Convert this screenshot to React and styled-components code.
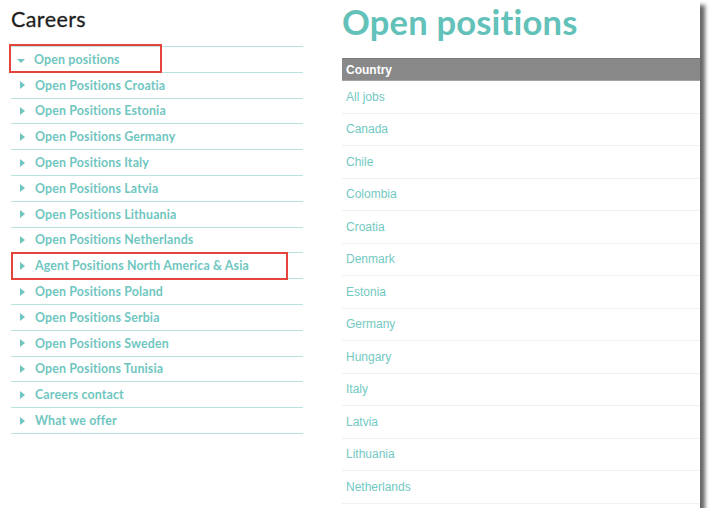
import React from 'react'
import styled, { createGlobalStyle } from 'styled-components'

const GlobalStyle = createGlobalStyle`
  html, body {
    margin: 0;
    padding: 0;
    background: #fff;
  }
  body {
    font-family: Lato, "Open Sans", Arial, sans-serif;
  }
`

const Frame = styled.div`
  width: 700px;
  height: 508px;
  background: #fff;
  box-shadow: 5px 5px 4px rgba(0, 0, 0, 0.6);
  overflow: hidden;
  display: grid;
  grid-template-columns: 292px 1fr;
  column-gap: 39px;
  padding-left: 11px;
  box-sizing: border-box;
`

const Sidebar = styled.aside`
  display: flex;
  flex-direction: column;
`

const Title = styled.h2`
  margin: 6px 0 0;
  height: 40px;
  font-size: 21.5px;
  font-weight: 400;
  color: #1e1e1e;
  letter-spacing: 0.4px;
  -webkit-text-stroke: 0.3px #1e1e1e;
`

const Menu = styled.ul`
  list-style: none;
  margin: 0;
  padding: 0;
  border-top: 1px solid #b9e2de;
`

const MenuItem = styled.li`
  position: relative;
  height: 25.8px;
  box-sizing: border-box;
  border-bottom: 1px solid #b9e2de;
  display: flex;
  align-items: center;
  gap: 9px;
  padding-left: ${p => (p.open ? '6px' : '9px')};
  font-size: 12.4px;
  font-weight: 700;
  letter-spacing: 0.15px;
  color: #6fc6bf;
`

const Arrow = styled.span`
  width: 0;
  height: 0;
  border-style: solid;
  ${p =>
    p.open
      ? `border-width: 4px 4px 0 4px;
         border-color: #6fc6bf transparent transparent transparent;
         margin-top: 3px;`
      : `border-width: 4px 0 4px 5px;
         border-color: transparent transparent transparent #6fc6bf;
         margin-right: 1px;`}
`

// red annotation boxes drawn over the menu
const Highlight = styled.span`
  position: absolute;
  left: ${p => p.left}px;
  top: ${p => p.top}px;
  width: ${p => p.width}px;
  height: ${p => p.height}px;
  border: 2px solid #e5443b;
  box-sizing: border-box;
  pointer-events: none;
`

const Main = styled.main`
  display: flex;
  flex-direction: column;
`

const Heading = styled.h1`
  margin: 0;
  height: 58px;
  font-size: 34.5px;
  line-height: 44px;
  font-weight: 700;
  color: #62c1b9;
  letter-spacing: 0.2px;
`

const Table = styled.table`
  width: 380px;
  border-collapse: collapse;
  font-family: Arial, "Liberation Sans", sans-serif;
`

const HeadCell = styled.th`
  height: 22px;
  padding: 0 4px;
  background: #898989;
  color: #fff;
  font-size: 12px;
  font-weight: 700;
  text-align: left;
  border-top: 1px solid #7a7a7a;
  border-bottom: 1px solid #a3a3a3;
  box-sizing: border-box;
`

const Cell = styled.td`
  height: 32.5px;
  padding: 0 4px;
  font-size: 12px;
  color: #72c9c2;
  border-bottom: 1px solid #f0f0f0;
  box-sizing: border-box;
`

const menu = [
  'Open positions',
  'Open Positions Croatia',
  'Open Positions Estonia',
  'Open Positions Germany',
  'Open Positions Italy',
  'Open Positions Latvia',
  'Open Positions Lithuania',
  'Open Positions Netherlands',
  'Agent Positions North America & Asia',
  'Open Positions Poland',
  'Open Positions Serbia',
  'Open Positions Sweden',
  'Open Positions Tunisia',
  'Careers contact',
  'What we offer',
]

const countries = [
  'All jobs',
  'Canada',
  'Chile',
  'Colombia',
  'Croatia',
  'Denmark',
  'Estonia',
  'Germany',
  'Hungary',
  'Italy',
  'Latvia',
  'Lithuania',
  'Netherlands',
]

const App = () => {
  return (
    <>
      <GlobalStyle />
      <Frame>
        <Sidebar>
          <Title>Careers</Title>
          <Menu>
            {menu.map((item, i) => (
              <MenuItem key={item} open={i === 0}>
                <Arrow open={i === 0} />
                {item}
                {i === 0 && <Highlight left={-2} top={-3} width={153} height={29} />}
                {i === 8 && <Highlight left={0} top={-1} width={277} height={28} />}
              </MenuItem>
            ))}
          </Menu>
        </Sidebar>
        <Main>
          <Heading>Open positions</Heading>
          <Table>
            <thead>
              <tr>
                <HeadCell>Country</HeadCell>
              </tr>
            </thead>
            <tbody>
              {countries.map(c => (
                <tr key={c}>
                  <Cell>{c}</Cell>
                </tr>
              ))}
            </tbody>
          </Table>
        </Main>
      </Frame>
    </>
  )
}

export default App
